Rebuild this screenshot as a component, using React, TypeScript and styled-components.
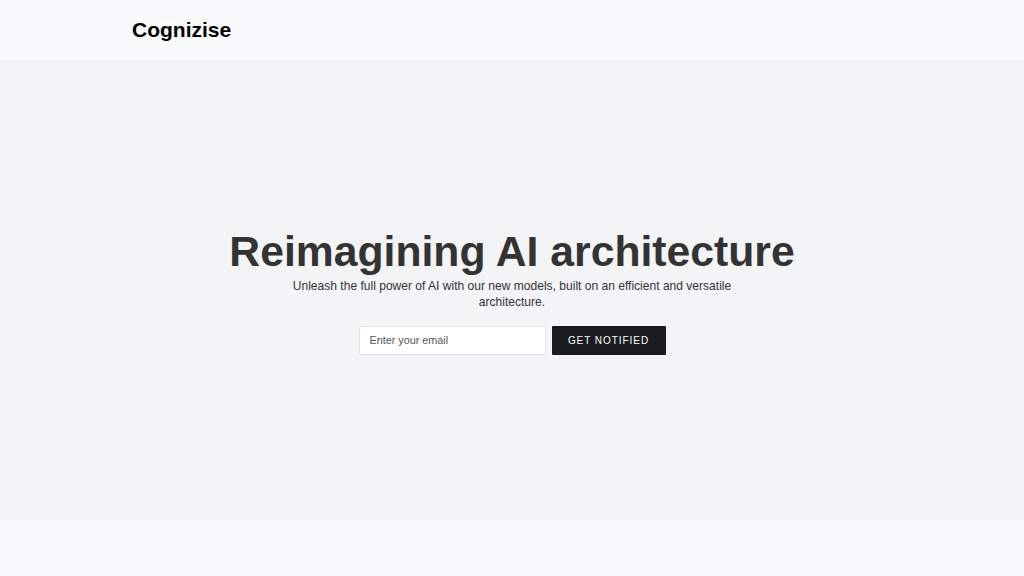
import React, { useState } from 'react';
import styled, { createGlobalStyle } from 'styled-components';

const GlobalStyle = createGlobalStyle`
  * {
    box-sizing: border-box;
  }

  body {
    margin: 0;
    font-family: "Liberation Sans", Arial, sans-serif;
    background-color: #f9fafb;
  }
`;

const App: React.FC = () => {
  const [email, setEmail] = useState<string>('');

  return (
    <>
      <GlobalStyle />
      <Header>
        <Container>
          <Logo>Cognizise</Logo>
        </Container>
      </Header>

      <Hero>
        <Title>Reimagining AI architecture</Title>
        <Subtitle>
          Unleash the full power of AI with our new models, built on an efficient and versatile architecture.
        </Subtitle>
        <SignupForm onSubmit={(e) => e.preventDefault()}>
          <EmailInput
            type="email"
            placeholder="Enter your email"
            value={email}
            onChange={(e) => setEmail(e.target.value)}
          />
          <NotifyButton type="submit">Get Notified</NotifyButton>
        </SignupForm>
      </Hero>

      <Footer />
    </>
  );
};

const Header = styled.header`
  height: 60px;
  background-color: #f9fafb;
  display: flex;
  align-items: center;
`;

const Container = styled.div`
  width: 100%;
  max-width: 760px;
  margin: 0 auto;
`;

const Logo = styled.div`
  font-size: 21px;
  font-weight: 700;
  color: #000;
`;

const Hero = styled.section`
  height: 460px;
  background-color: #f3f4f6;
  display: flex;
  flex-direction: column;
  align-items: center;
  justify-content: center;
  text-align: center;
`;

const Title = styled.h1`
  margin: 0;
  font-size: 42.7px;
  font-weight: 700;
  line-height: 50px;
  color: #333;
`;

const Subtitle = styled.p`
  margin: 2px 0 0;
  max-width: 448px;
  font-size: 12.05px;
  line-height: 16px;
  color: #333;
`;

const SignupForm = styled.form`
  display: flex;
  gap: 6px;
  margin-top: 16px;
`;

const EmailInput = styled.input`
  width: 187px;
  height: 29px;
  padding: 0 10px;
  border: 1px solid #e2e4e8;
  border-radius: 2px;
  background-color: #fff;
  font-family: "Liberation Sans", Arial, sans-serif;
  font-size: 10.8px;
  color: #333;

  &::placeholder {
    color: #555;
  }

  &:focus {
    outline: none;
  }
`;

const NotifyButton = styled.button`
  width: 114px;
  height: 29px;
  border: none;
  border-radius: 1px;
  background-color: #1a1b1e;
  color: #fff;
  font-family: "Liberation Sans", Arial, sans-serif;
  font-size: 10px;
  letter-spacing: 0.95px;
  text-transform: uppercase;
  cursor: pointer;
`;

const Footer = styled.footer`
  height: 56px;
  background-color: #f9fafb;
`;

export default App;
